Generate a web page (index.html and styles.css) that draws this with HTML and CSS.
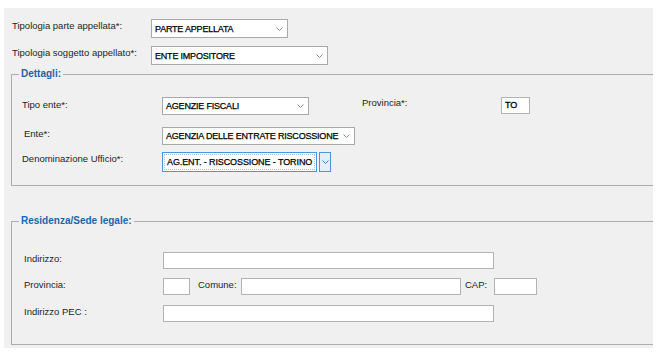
FILE: index.html
```html
<!DOCTYPE html>
<html lang="it">
<head>
<meta charset="utf-8">
<title>Parte appellata</title>
<link rel="stylesheet" href="styles.css">
</head>
<body>
<div class="panel">
  <div class="row row-top">
    <span class="lbl lbl-top">Tipologia parte appellata*:</span>
    <div class="combo c-parte"><span>PARTE APPELLATA</span><svg width="7" height="4" viewBox="0 0 7 4"><path d="M0.5 0.5 L3.5 3.5 L6.5 0.5" fill="none" stroke="#8a8a8a" stroke-width="1"/></svg></div>
  </div>
  <div class="row row-top row-gap">
    <span class="lbl lbl-top">Tipologia soggetto appellato*:</span>
    <div class="combo c-sogg"><span>ENTE IMPOSITORE</span><svg width="7" height="4" viewBox="0 0 7 4"><path d="M0.5 0.5 L3.5 3.5 L6.5 0.5" fill="none" stroke="#8a8a8a" stroke-width="1"/></svg></div>
  </div>

  <fieldset class="grp grp-det">
    <legend>Dettagli:</legend>
    <div class="frow">
      <span class="lbl lcol lbl-tipo">Tipo ente*:</span>
      <div class="combo c-tipo"><span>AGENZIE FISCALI</span><svg width="7" height="4" viewBox="0 0 7 4"><path d="M0.5 0.5 L3.5 3.5 L6.5 0.5" fill="none" stroke="#8a8a8a" stroke-width="1"/></svg></div>
      <span class="lbl lbl-prov">Provincia*:</span>
      <div class="inp i-to">TO</div>
    </div>
    <div class="frow frow-2">
      <span class="lbl lcol lbl-ente">Ente*:</span>
      <div class="combo c-ente"><span>AGENZIA DELLE ENTRATE RISCOSSIONE</span><svg width="7" height="4" viewBox="0 0 7 4"><path d="M0.5 0.5 L3.5 3.5 L6.5 0.5" fill="none" stroke="#8a8a8a" stroke-width="1"/></svg></div>
    </div>
    <div class="frow frow-3">
      <span class="lbl lcol">Denominazione Ufficio*:</span>
      <div class="focus-combo">
        <div class="fc-text"><span>AG.ENT. - RISCOSSIONE - TORINO</span></div>
        <div class="fc-btn"><svg width="7" height="4" viewBox="0 0 7 4"><path d="M0.5 0.5 L3.5 3.5 L6.5 0.5" fill="none" stroke="#3f7fbf" stroke-width="1"/></svg></div>
      </div>
    </div>
  </fieldset>

  <fieldset class="grp grp-res">
    <legend>Residenza/Sede legale:</legend>
    <div class="frow">
      <span class="lbl rcol">Indirizzo:</span>
      <div class="inp i-long"></div>
    </div>
    <div class="frow rrow-2">
      <span class="lbl rcol">Provincia:</span>
      <div class="inp i-prov"></div>
      <span class="lbl lbl-com">Comune:</span>
      <div class="inp i-com"></div>
      <span class="lbl lbl-cap">CAP:</span>
      <div class="inp i-cap"></div>
    </div>
    <div class="frow rrow-3">
      <span class="lbl rcol">Indirizzo PEC :</span>
      <div class="inp i-long"></div>
    </div>
  </fieldset>
</div>
</body>
</html>
```

FILE: styles.css
```css
* { box-sizing: border-box; }
html, body { margin: 0; background: #ffffff; }
body {
  font-family: "Liberation Sans", Arial, sans-serif;
  font-size: 9.5px;
  color: #1e1e1e;
}
.panel {
  margin: 8px 7px 0 4px;
  background: #f0f0f0;
  padding: 11px 0 3px 7px;
}
.row { display: flex; align-items: flex-start; }
.row-top { margin-left: 1px; }
.row-gap { margin-top: 8px; }
.lbl { line-height: 13px; white-space: nowrap; }
.lbl-top { width: 139px; }

.combo {
  display: flex;
  align-items: center;
  justify-content: space-between;
  background: #fff;
  border: 1px solid #a9a9a9;
  height: 19px;
  padding: 0 4px 0 3px;
  font-size: 9px;
  letter-spacing: -0.2px;
  color: #000;
  -webkit-text-stroke: 0.25px #000;
  white-space: nowrap;
}
.combo svg { flex: none; }
.c-parte { width: 137px; }
.c-sogg { width: 177px; }
.c-tipo { width: 147px; height: 18px; }
.c-ente { width: 193px; height: 18px; }

.grp {
  margin: 0;
  border: 1px solid #adadad;
  border-right: none;
  min-width: 0;
}
.grp legend {
  font-weight: bold;
  font-size: 10px;
  line-height: 12px;
  color: #1f64a8;
  padding: 0 2px;
  margin-left: -3px;
}
.grp-det { margin-top: 3px; padding: 17px 0 13px 10px; }
.grp-res { margin-top: 29px; padding: 25px 0 22px 10px; }

.frow { display: flex; align-items: flex-start; }
.lcol { width: 140px; }
.lbl-tipo { margin-top: 1px; }
.lbl-ente { padding-left: 2px; }
.frow-2 { margin-top: 12px; }
.frow-3 { margin-top: 7px; }
.lbl-prov { margin-left: 53px; width: 139px; margin-top: -1px; }

.inp {
  background: #fff;
  border: 1px solid #b3b3b3;
  height: 17px;
}
.i-to {
  width: 29px;
  font-size: 9px;
  color: #000;
  -webkit-text-stroke: 0.3px #000;
  line-height: 15px;
  padding-left: 3px;
}

.focus-combo { display: flex; gap: 2px; height: 20px; }
.fc-text {
  width: 155px;
  border: 1px solid #4f94d8;
  background: #fff;
  padding: 1px;
  display: flex;
}
.fc-text span {
  flex: 1;
  border: 1px dotted #9cc3ea;
  font-size: 9px;
  letter-spacing: -0.1px;
  color: #000;
  -webkit-text-stroke: 0.25px #000;
  line-height: 14px;
  padding-left: 2px;
  white-space: nowrap;
  overflow: hidden;
}
.fc-btn {
  width: 12px;
  border: 1px solid #4f94d8;
  background: #e3effb;
  display: flex;
  align-items: center;
  justify-content: center;
}

.rcol { width: 141px; padding-left: 2px; }
.rrow-2 { margin-top: 9px; }
.rrow-3 { margin-top: 10px; }
.i-long { width: 331px; }
.i-prov { width: 27px; }
.lbl-com { margin-left: 8px; width: 43px; }
.i-com { width: 220px; }
.lbl-cap { margin-left: 4px; width: 29px; }
.i-cap { width: 43px; }
```
